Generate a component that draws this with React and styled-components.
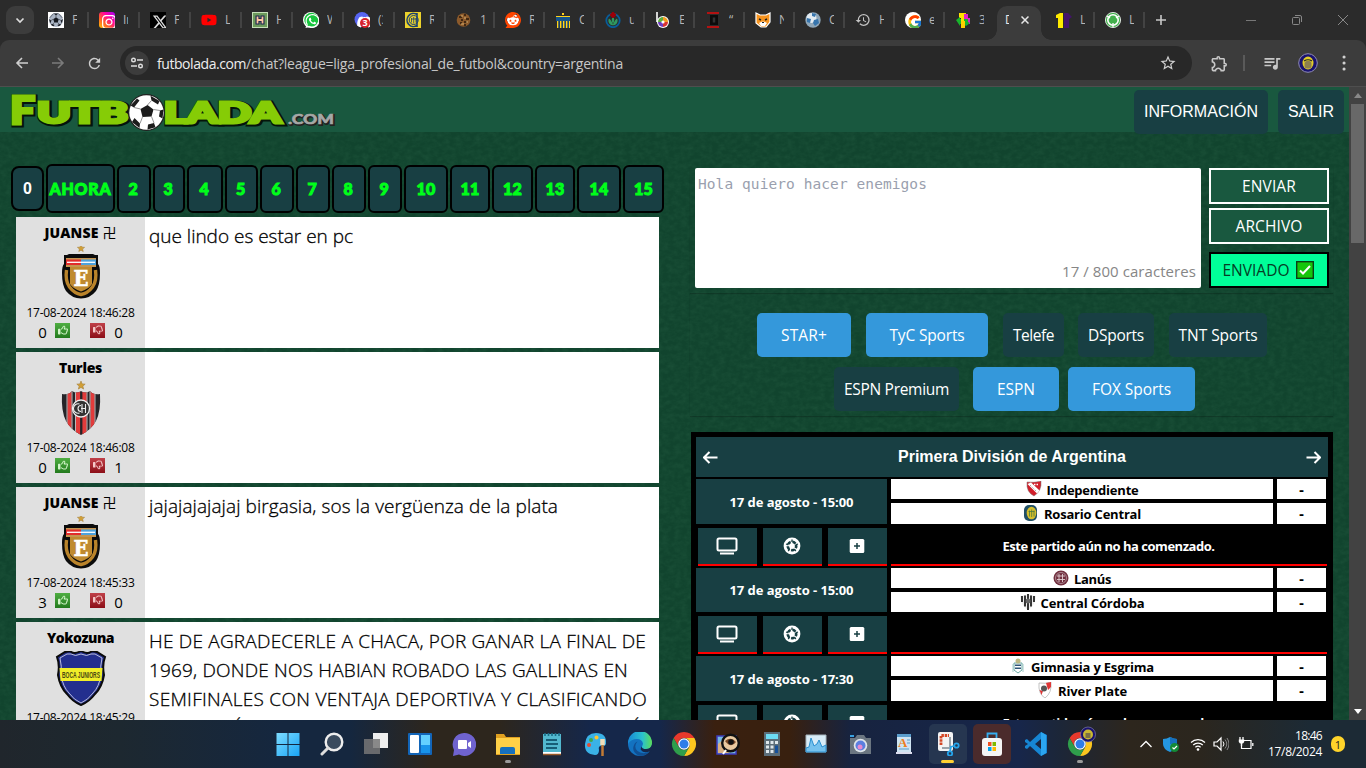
import React, { useLayoutEffect, useRef, useState } from 'react';
import styled, { createGlobalStyle, css } from 'styled-components';
import { FaInstagram, FaYoutube, FaWhatsapp, FaDiscord, FaReddit, FaXTwitter, FaRegThumbsUp, FaRegThumbsDown } from 'react-icons/fa6';
import { FcGoogle } from 'react-icons/fc';
import { MdHistory, MdRefresh, MdStarBorder, MdOutlineExtension, MdQueueMusic } from 'react-icons/md';

const sans = '"Open Sans", "Noto Sans", "Noto Sans CJK JP", sans-serif';
const arial = '"Liberation Sans", Arial, sans-serif';

const Global = createGlobalStyle`
  * { box-sizing: border-box; }
  html, body { margin: 0; height: 768px; overflow: hidden; background: #12462f; }
  body { font-family: ${sans}; }
  button { font: inherit; border: 0; padding: 0; margin: 0; }
  svg { display: block; flex: none; }
`;

/* Spaces the letters of a line so that it takes the given width. */
const FitSpan = styled.span`
  display: inline-block;
  white-space: pre;
  flex: none;
`;
function Fit({ w, children }) {
  const ref = useRef(null);
  const [gap, setGap] = useState(0);
  useLayoutEffect(() => {
    const natural = ref.current.getBoundingClientRect().width;
    setGap((w - natural) / String(children).length);
  }, []);
  return <FitSpan ref={ref} style={{ letterSpacing: `${gap}px` }}>{children}</FitSpan>;
}

/* ---------- browser ---------- */
const Screen = styled.div`
  width: 1366px;
  height: 768px;
  display: flex;
  flex-direction: column;
  overflow: hidden;
`;
const TabStrip = styled.div`
  height: 40px;
  flex: none;
  display: flex;
  align-items: center;
  background: #2b2b2b;
`;
const TabSearch = styled.button`
  width: 28px;
  height: 28px;
  margin: 0 4px 0 6px;
  border-radius: 9px;
  background: #3c3c3c;
  display: grid;
  place-items: center;
  flex: none;
`;
const Tab = styled.div`
  width: ${p => p.$w}px;
  height: 16px;
  flex: none;
  display: flex;
  align-items: center;
  padding-left: 10px;
  border-right: 2px solid ${p => (p.$last ? 'transparent' : '#434343')};
`;
const TabTitle = styled.span`
  width: 5px;
  margin-left: 8px;
  overflow: hidden;
  white-space: nowrap;
  font-size: 12px;
  line-height: 16px;
  color: #b5b5b5;
`;
const ActiveTab = styled.div`
  position: relative;
  width: 44px;
  height: 34px;
  align-self: flex-end;
  margin: 0 5px 0 2px;
  border-radius: 10px 10px 0 0;
  background: #3c3c3c;
  flex: none;
  display: flex;
  align-items: center;
  padding: 0 0 6px;
  &::before, &::after {
    content: '';
    position: absolute;
    bottom: 0;
    width: 10px;
    height: 10px;
  }
  &::before { left: -10px; background: radial-gradient(circle at 0 0, transparent 9.5px, #3c3c3c 10px); }
  &::after { right: -10px; background: radial-gradient(circle at 100% 0, transparent 9.5px, #3c3c3c 10px); }
  ${TabTitle} { width: 4px; margin: 0 12px 0 8px; color: #e8e8e8; }
`;
const WindowButtons = styled.div`
  margin-left: auto;
  display: flex;
  gap: 34px;
  padding-right: 17px;
`;
const Toolbar = styled.div`
  background: #2b2b2b;
  flex: none;
`;
const ToolbarInner = styled.div`
  height: 47px;
  border-radius: 9px 9px 0 0;
  border-bottom: 1px solid #4e4e4e;
  background: #3c3c3c;
  display: flex;
  align-items: center;
  padding-left: 14px;
`;
const NavIcons = styled.div`
  width: 106px;
  display: flex;
  gap: 20px;
`;
const Omnibox = styled.div`
  width: 1072px;
  height: 34px;
  border-radius: 17px;
  background: #282828;
  display: flex;
  align-items: center;
  padding: 0 15px 0 5px;
  font-size: 14px;
  color: #c7c7c7;
  b { color: #eee; font-weight: 400; }
`;
const SiteInfo = styled.span`
  width: 24px;
  height: 24px;
  border-radius: 50%;
  background: #3c3c3c;
  display: grid;
  place-items: center;
  margin-right: 8px;
`;
const Url = styled.span` flex: 1; `;
const ToolRight = styled.div`
  display: flex;
  align-items: center;
  padding-left: 18px;
`;
const Divider = styled.i`
  width: 2px;
  height: 16px;
  margin: 0 17px 0 14px;
  background: #5a5a5a;
`;

/* ---------- page ---------- */
const Viewport = styled.div`
  height: 633px;
  flex: none;
  display: flex;
  overflow: hidden;
`;
const Page = styled.div`
  position: relative;
  width: 1349px;
  height: 633px;
  overflow: hidden;
  background: #11442e;
`;
const Texture = styled.svg`
  position: absolute;
  inset: 0;
`;
const Header = styled.header`
  position: relative;
  height: 45px;
  background: #19583f;
  display: flex;
  align-items: flex-start;
  padding: 3px 5px 0 6px;
`;
const HeaderButton = styled.button`
  height: 44px;
  width: ${p => p.$w}px;
  margin-left: 10px;
  border-radius: 5px;
  background: #183f43;
  color: #fff;
  font: 16px ${arial};
`;
const Columns = styled.div`
  position: relative;
  display: flex;
  padding: 32px 16px 0 11px;
`;
const Left = styled.section` width: 653px; flex: none; `;
const Right = styled.section` width: 643px; margin: 4px 0 0 26px; flex: none; `;
const Pager = styled.nav`
  display: flex;
  align-items: center;
  gap: 2px;
  height: 49px;
`;
const PageButton = styled.button`
  width: ${p => p.$w}px;
  height: 48px;
  border: 2px solid #000;
  border-radius: 6px;
  background: #183f43;
  color: #00ff1a;
  font: 900 16px Lato, sans-serif;
  -webkit-text-stroke: 1px #00ff1a;
  flex: none;
  ${p => p.$tall && css`height: 49px;`}
  ${p => p.$count && css`
    height: 45px;
    border-radius: 8px;
    color: #fff;
    font: bold 16px ${arial};
    -webkit-text-stroke: 0;
  `}
`;
const Messages = styled.div`
  margin: 4px 0 0 5px;
  width: 643px;
  display: flex;
  flex-direction: column;
  gap: 4px;
`;
const Message = styled.article`
  height: 131px;
  display: flex;
  background: #fff;
`;
const Author = styled.div`
  width: 129px;
  background: #e0e0e0;
  display: flex;
  flex-direction: column;
  align-items: center;
  padding-top: 6px;
  color: #000;
`;
const Name = styled.div`
  height: 20px;
  display: flex;
  align-items: center;
  gap: 4px;
  font-size: 14px;
  font-weight: 800;
  line-height: 20px;
  span + span { font-weight: 400; }
`;
const CrestBox = styled.div`
  height: 61px;
  display: flex;
  padding-top: 3px;
`;
const Stamp = styled.div`
  font-size: 12px;
  line-height: 18px;
  height: 18px;
`;
const Votes = styled.div`
  height: 20px;
  display: flex;
  align-items: center;
  font-size: 15px;
  span { width: 9px; text-align: center; line-height: 20px; }
`;
const Thumb = styled.i`
  width: 15px;
  height: 15px;
  margin: ${p => (p.$down ? '0 9px 4px 10px' : '0 10px 4px 8px')};
  display: grid;
  place-items: center;
  color: ${p => (p.$down ? '#f5c9c9' : '#d3f5c9')};
  background: ${p => (p.$down ? 'linear-gradient(#c04048, #8c0f18)' : 'linear-gradient(#4fae42, #237a1d)')};
`;
const Body = styled.div`
  padding: 5px 0 0 4px;
  font-size: 19px;
  font-weight: 300;
  -webkit-text-stroke: 0.3px #000;
  line-height: 29px;
  color: #000;
  div { height: 29px; }
`;

const Composer = styled.div`
  height: 125px;
  padding-left: 5px;
  display: flex;
  gap: 8px;
  box-shadow: 0 1px 1px rgba(0, 0, 0, 0.2);
`;
const TextBox = styled.div`
  width: 506px;
  height: 120px;
  border-radius: 2px;
  background: #fff;
  display: flex;
  flex-direction: column;
  justify-content: space-between;
  padding: 6px 5px 6px 3px;
`;
const Placeholder = styled.div`
  font: 14.5px/20px "DejaVu Sans Mono", monospace;
  color: #9a9fae;
`;
const Counter = styled.div`
  text-align: right;
  font-size: 15px;
  line-height: 22px;
  color: #868686;
`;
const Actions = styled.div`
  width: 120px;
  display: flex;
  flex-direction: column;
  gap: 4px;
`;
const Action = styled.button`
  height: 36px;
  border: 2px solid ${p => (p.$sent ? '#000' : '#fff')};
  background: ${p => (p.$sent ? '#00ff99' : '#19583f')};
  color: ${p => (p.$sent ? '#053d25' : '#fff')};
  margin-top: ${p => (p.$sent ? 4 : 0)}px;
  padding-right: ${p => (p.$sent ? 2 : 0)}px;
  display: flex;
  align-items: center;
  justify-content: center;
  gap: 6px;
  font-size: 15.5px;
`;
const Channels = styled.div`
  height: 123px;
  padding-top: 20px;
  box-shadow: 0 1px 1px rgba(0, 0, 0, 0.2);
`;
const ChannelRow = styled.div`
  display: flex;
  padding-left: ${p => p.$left}px;
  height: 54px;
`;
const Channel = styled.button`
  width: ${p => p.$w}px;
  height: 44px;
  margin-right: ${p => p.$gap}px;
  border-radius: 5px;
  background: ${p => (p.$on ? '#3498db' : '#183f43')};
  color: #fff;
  font-size: 15.5px;
`;
const Fixture = styled.div`
  margin: 16px 0 0 1px;
  width: 642px;
  padding: 5px;
  background: #000;
`;
const LeagueBar = styled.div`
  height: 40px;
  background: #183f43;
  display: flex;
  align-items: center;
  justify-content: space-between;
  padding: 0 7px;
  color: #fff;
  font: bold 16px ${arial};
`;
const Match = styled.div`
  display: flex;
  gap: 4px;
  padding-top: 2px;
  height: ${p => p.$h}px;
`;
const MatchSide = styled.div` width: 191px; `;
const MatchDate = styled.div`
  height: ${p => p.$h}px;
  background: #183f43;
  color: #fff;
  display: grid;
  place-items: center;
  font-size: 13px;
  font-weight: 700;
`;
const MatchTools = styled.div`
  margin-top: 4px;
  padding-left: 2px;
  display: flex;
  gap: 6px;
`;
const MatchTool = styled.button`
  width: 59px;
  height: 38px;
  padding-right: 1px;
  border-bottom: 2px solid #f00;
  background: #183f43;
  display: grid;
  place-items: center;
  color: #fff;
`;
const MatchMain = styled.div`
  width: 437px;
  display: flex;
  flex-direction: column;
`;
const TeamRow = styled.div`
  display: flex;
  gap: 4px;
  height: ${p => p.$h}px;
  margin-bottom: 4px;
`;
const Team = styled.div`
  width: 382px;
  padding-top: 1px;
  background: #fff;
  color: #000;
  display: flex;
  justify-content: center;
  align-items: center;
  gap: 5px;
  font-size: 13px;
  font-weight: 700;
  line-height: 18px;
  svg { margin-top: -2px; }
`;
const Score = styled(Team)` width: 49px; font-family: ${arial}; font-size: 15px; `;
const Notice = styled.div`
  width: 436px;
  height: 38px;
  padding-right: 1px;
  border-bottom: 2px solid #f00;
  color: #fff;
  display: grid;
  place-items: center;
  font-size: 13px;
  font-weight: 700;
`;
const Scrollbar = styled.div`
  width: 17px;
  background: #424242;
  display: flex;
  flex-direction: column;
  align-items: center;
  padding: 6px 0 6px;
`;
const ScrollThumb = styled.div`
  width: 13px;
  height: 139px;
  margin: 6px 0 auto;
  background: #686868;
`;

/* ---------- taskbar ---------- */
const Taskbar = styled.footer`
  height: 48px;
  flex: none;
  display: flex;
  align-items: center;
  padding-left: 266px;
  background: linear-gradient(90deg, #20262c 0, #1d2830 120px, #15273f 280px, #15273f 350px, #2d261d 430px, #2d261d 500px, #15274a 590px, #15274a 660px, #3a200f 715px, #38200f 790px, #17233f 850px, #17264a 1020px, #1c2638 1060px, #2d261d 1130px, #2b261e 1200px, #1c2a35 1310px, #1c2a35 100%);
`;
const TaskItem = styled.div`
  position: relative;
  width: 44px;
  height: 48px;
  display: grid;
  place-items: center;
  flex: none;
`;
const TaskTile = styled.div`
  width: 38px;
  height: 40px;
  margin: 0 -3px;
  border-radius: 5px;
  display: grid;
  place-items: center;
  background: ${p => p.$bg || 'transparent'};
`;
const RunMark = styled.i`
  position: absolute;
  bottom: 5px;
  left: ${p => (p.$wide ? 15 : 19)}px;
  width: ${p => (p.$wide ? 13 : 6)}px;
  height: 3px;
  border-radius: 2px;
  background: ${p => (p.$wide ? '#ffd033' : '#9a9a9a')};
`;
const Tray = styled.div`
  margin-left: auto;
  padding-right: 21px;
  display: flex;
  align-items: center;
`;
const Space = styled.span`
  width: ${p => p.$w}px;
  flex: ${p => (p.$w ? 'none' : 1)};
`;
const Clock = styled.div`
  width: 63px;
  margin-right: 9px;
  text-align: right;
  font-size: 12px;
  line-height: 16px;
  color: #fff;
`;
const Badge = styled.div`
  width: 14px;
  height: 16px;
  border-radius: 8px;
  background: #ffd42a;
  display: grid;
  place-items: center;
  font-size: 11px;
  color: #222;
`;

/* ---------- drawings ---------- */
const I = ({ s = 16, w, h, v = 16, vb, children }) => (
  <svg width={w || s} height={h || s} viewBox={vb || `0 0 ${v} ${v}`} fill="none">{children}</svg>
);

const Ball = ({ x = 8, y = 8, r = 8, bg = '#fff', fg = '#111' }) => (
  <g transform={`translate(${x} ${y}) scale(${r / 10})`}>
    <circle r="10" fill={bg} />
    <path d="M0-4 3.9-1.2 2.4 3.4H-2.4L-3.9-1.2Z M-3.5-9.3 3.5-9.3 0-6.8Z M9.9-1.5 8.3 5 6.6 1Z M-9.9-1.5-8.3 5-6.6 1Z M4 9.1 1.8 7 6.3 5.2 7 7Z M-4 9.1-1.8 7-6.3 5.2-7 7Z" fill={fg} />
    <path d="M0-4V-7M3.9-1.2 6.8.5M2.4 3.4 4.4 6M-2.4 3.4-4.4 6M-3.9-1.2-6.8.5M3.5-9.3 9-3M-3.5-9.3-9-3" stroke={fg} strokeWidth=".7" />
  </g>
);

/* The logo's ball, turned: a dark patch in the middle and a ring of patches cut by the rim. */
const LogoBall = () => (
  <g>
    <circle r="18.500" fill="#222" />
    <circle r="17.200" fill="#fff" />
    <path d="M-6-3.500 1-7.500 7-3 5 4-4 4.500Z M-16-7-9.500-14-7-12-12.500-5Z M4-16.800 13-11.500 11.500-8 5-12Z M17-3 16 6 12.500 4 13.500-2Z M9 14.800 1 17 1.500 12 7.500 10.500Z M-14.500 9.500-7 15.500-6.500 11-12 5.500Z" fill="#1c1c1c" />
    <path d="M1-7.500 5-12M7-3l6.500 1M5 4l2.500 6.500M-4 4.500-6.500 11M-6-3.500-12.500-5" stroke="#777" strokeWidth=".8" />
  </g>
);

const favicons = {
  ball: <I><rect width="16" height="16" fill="#fff" /><Ball r={7} bg="#aab4c4" fg="#15181f" /></I>,
  instagram: <svg width="16" height="16" viewBox="0 0 16 16"><defs><linearGradient id="ig" x1="0" y1="1" x2="1" y2="0"><stop offset="0" stopColor="#ffc400" /><stop offset=".35" stopColor="#ff5a2c" /><stop offset=".65" stopColor="#ff00a0" /><stop offset="1" stopColor="#a000ff" /></linearGradient></defs><rect width="16" height="16" rx="3" fill="url(#ig)" /><FaInstagram x="2" y="2" width="12" height="12" color="#fff" /></svg>,
  x: <svg width="16" height="16"><rect width="16" height="16" /><FaXTwitter x="2" y="2" width="12" height="12" color="#ddd" /></svg>,
  youtube: <FaYoutube size={16} color="#f00" />,
  hattrick: <I><rect x=".5" y=".5" width="15" height="15" fill="#6c9a5b" stroke="#c5e0b8" /><path d="M5.500 3.500v9M10.500 3.500v9M5 8h6" stroke="#1b2350" strokeWidth="4" /><path d="M5.500 4.500v7M10.500 4.500v7M5 8h6" stroke="#ffc7a0" strokeWidth="1.800" /></I>,
  whatsapp: <svg width="16" height="16"><circle cx="8" cy="8" r="8" fill="#fff" /><circle cx="8.3" cy="7.7" r="7" fill="#18c53e" /><FaWhatsapp x="1.5" y="1" width="13.5" height="13.5" color="#fff" /></svg>,
  discord: <svg width="16" height="16"><circle cx="8" cy="7.5" r="7.5" fill="#5865f2" /><FaDiscord x="2.5" y="2" width="10" height="10" color="#fff" /><circle cx="11" cy="11" r="5" fill="#d8232a" /><text x="8.4" y="14.4" fontSize="9" fontWeight="700" fontFamily="Open Sans" fill="#fff">3</text></svg>,
  central: <I><rect width="16" height="16" fill="#ecd22c" /><path d="M12 2.5A6.5 6.5 0 1 0 12 13.5M12 1v14" stroke="#1c4272" strokeWidth="1.6" /><circle cx="8.7" cy="8" r="4.5" stroke="#1c4272" /><path d="M6.5 6v4.5M8.7 5v6.5M11 6v4.5M6 7h6" stroke="#1c4272" strokeWidth=".8" /></I>,
  cookie: <I><circle cx="7.5" cy="8" r="6.8" fill="#8c5a2b" /><path d="M3 5h3M8 3h2M5 8h2M10 7h3M4 11h2M8 10h3M8 13h2" stroke="#2a190b" strokeWidth="1.6" /><path d="M5 4h2M8 6h2M5 12h3M10 10h2" stroke="#d8b070" strokeWidth="1" /></I>,
  reddit: <svg width="16" height="16"><circle cx="8" cy="8" r="6" fill="#fff" /><FaReddit width="16" height="16" color="#ff4500" /></svg>,
  gate: <I><path d="M7 1h2v2H7zM1 4h14v2H1zM2 9h1.5v7H2zM5 9h1.5v7H5zM8 9h1.5v7H8zM11 9h1.5v7H11zM14 9h1v7h-1z" fill="#ffd31a" /><path d="M1 5h14v4H1z" fill="#14538c" /><path d="M4 9v7M7.3 9v7M10.3 9v7M13.3 9v7" stroke="#14538c" /></I>,
  wiki: <I><circle cx="8" cy="8.500" r="6.700" stroke="#075e9b" strokeWidth="1.800" /><path d="M4 6.500a4.600 4.600 0 1 0 8 0q-2 1-4 6-2-5-4-6Z" fill="#2f9a60" /><path d="M8 5q2.500 2 0 7-2.500-5 0-7Z" fill="#2f9a60" /><path d="m8 0 3 2.800L8 6 5 2.800Z" fill="#9c0008" stroke="#9c0008" /></I>,
  bwheel: <I><path d="M2 0v10" stroke="#fff" strokeWidth="1.6" /><circle cx="8" cy="10" r="6" fill="#fff" /><path d="M8 10V5a5 5 0 0 1 5 5z" fill="#f39b21" /><path d="M8 10h5a5 5 0 0 1-5 5z" fill="#d83333" /><path d="M8 10v5a5 5 0 0 1-5-5z" fill="#6d3bc0" /><path d="M8 10H3a5 5 0 0 1 5-5z" fill="#5dad3f" /><circle cx="8" cy="10" r="1.6" fill="#fff" /></I>,
  redbar: <I><path d="M2 1h12M2 15h12" stroke="#b31212" strokeWidth="2" /><path d="M5 3h8v10H5z" fill="#0c0c0c" /><path d="M9 5.5v5" stroke="#333" strokeWidth="2.5" /></I>,
  cat: <I><path d="m1 1 4 2h6l4-2v9l-4 5H6L1 11z" fill="#f6931e" stroke="#fff" strokeWidth="1.2" /><path d="M4 7l2 1M12 7l-2 1" stroke="#222" strokeWidth="1.4" /><path d="M4 11q4-3 8 0l-2 3H6z" fill="#fff" /><path d="m7 10 1 1 1-1" stroke="#222" /></I>,
  bluesphere: <I><circle cx="8" cy="8" r="7.700" fill="#8fa6b8" /><circle cx="6.500" cy="6" r="5" fill="#e3ebf1" /><path d="m9 8 4-1 1 4-4 3-2-3zM2 6l4 1-1 4-3-1zM7 1l4 1-1 3-3-1z" fill="#3775ad" /></I>,
  history: <MdHistory size={16} color="#c4c4c4" />,
  google: <svg width="16" height="16"><circle cx="8" cy="8" r="8" fill="#fff" /><FcGoogle x="2" y="2" width="12" height="12" /></svg>,
  puzzle: <I><path d="M4 1h7v5H4z" fill="#ffe100" /><path d="M9 2h4v4h2v6H9z" fill="#e31ec9" /><path d="m1 8 4-3v2h8v3l2 1-4 3-3-2H5v2z" fill="#18b42c" /><path d="M6 9h4v7H6z" fill="#ffd000" /><path d="M6 4h3v5H6z" fill="#ffe100" /></I>,
  one: <I><path d="M0 3 4 1h3v15H2V6H0z" fill="#ffea00" /><path d="M8 1h4l4 4-3 2v9H8z" fill="#43146b" /></I>,
  greenball: <I><circle cx="8" cy="8" r="7.600" fill="#42b04c" stroke="#fff" strokeWidth=".8" /><circle cx="8" cy="8" r="5.200" stroke="#fff" strokeWidth="1.600" /><path d="M5 6h6l.5 2L8 11 4.500 8Z" fill="#42b04c" /><path d="m2 4 3 2M14 4l-3 2M8 11v4" stroke="#fff" strokeWidth="1.300" /></I>,
};

const tabs = [
  ['ball', 'F', 51], ['instagram', 'In', 51], ['x', 'F', 51], ['youtube', 'L', 51], ['hattrick', 'H', 51], ['whatsapp', 'W', 51],
  ['discord', '(3', 51], ['central', 'R', 51], ['cookie', '1', 49], ['reddit', 'R', 50], ['gate', 'C', 50], ['wiki', 'u', 50],
  ['bwheel', 'E', 50], ['redbar', '“', 50], ['cat', 'N', 50], ['bluesphere', 'C', 50], ['history', 'H', 50], ['google', 'e', 50],
];

const Avatar = ({ s = 20 }) => (
  <I s={s} v={20}><circle cx="10" cy="10" r="9.3" fill="#19126f" stroke="#8f8bb5" /><ellipse cx="10" cy="10" rx="5.500" ry="6.500" fill="#e2cd2a" /><rect x="6.500" y="8" width="7" height="7.500" rx="2.500" fill="#8c7f4e" /><path d="M6 8q4-2.500 8 0" stroke="#222" strokeWidth="1.100" /></I>
);

const Star = ({ x, y, r }) => (
  <path transform={`translate(${x} ${y}) scale(${r})`} d="M0-1 .26-.36.95-.31.42.14.59.81 0 .44-.59.81-.42.14-.95-.31-.26-.36Z" fill="#d29f35" stroke="#a8843f" strokeWidth=".15" />
);

const crests = {
  riestra: (
    <I w={40} h={54} vb="0 0 40 54">
      <Star x={20} y={2.5} r={3.8} />
      <path d="M3 9h3l2-1h24l2 1h3v9q2 2 2 9 0 12-4 18-6 7.500-15 7.500T5 45Q1 39 1 27q0-7 2-9Z" fill="#0b0b0b" />
      <path d="M5.500 24q-1.500 11 3 17 5 6.500 11.500 7.500 6.500-1 11.500-7.500 4.500-6 3-17" stroke="#b9832a" strokeWidth="3.400" />
      <path d="M9 21h22v17q-3 5-11 7.500-8-2.500-11-7.500Z" fill="#c08a30" />
      <path d="M5 12h30v9H5z" fill="#c59550" /><path d="M5 13.500h15v5.500H5z" fill="#e12b2b" /><path d="M20 13.500h15v5.500H20z" fill="#4da3dd" /><path d="M6 16.300h28" stroke="#fff" strokeWidth="1.300" />
      <text x="12.500" y="39.500" fontSize="22" fontWeight="700" fontFamily="DejaVu Serif" fill="#fff" stroke="#fff" strokeWidth=".6" textLength="15" lengthAdjust="spacingAndGlyphs">E</text>
    </I>
  ),
  chacarita: (
    <I w={40} h={54} vb="0 0 40 54">
      <defs><clipPath id="chaca"><path d="M1 13q7 1 10-3 5 3 9 0 4 3 9 0 3 4 10 3 1 17-4 27-5 9-15 14Q10 49 5 40 0 30 1 13Z" /></clipPath></defs>
      <Star x={20} y={4.5} r={4.4} />
      <g clipPath="url(#chaca)"><path d="M0 8h40v48H0z" fill="#252428" /><path d="M8.500 8v46M17 8v46M23.500 8v46M31.500 8v46" stroke="#e23b3b" strokeWidth="4.200" /><path d="M6 8v46M11 8v46M14.500 8v46M26 8v46M29 8v46M34 8v46" stroke="#ddd" strokeWidth=".8" /></g>
      <circle cx="20" cy="27.500" r="8.500" fill="#333" stroke="#eee" strokeWidth="1.300" />
      <path d="M18.500 23a4.700 4.700 0 1 0 0 9M20 24.500a3 3 0 1 0 0 6M21 23v9M24.500 23v9M20 27.500h4.500" stroke="#eee" strokeWidth="1.100" />
    </I>
  ),
  boca: (
    <I w={52} h={56} vb="0 1 52 56">
      <path d="m10 2 5-1q4 4 11 0 7 4 11 0l5 1 8 5q-3 8-1 18-2 12-9 19-6 8-14 11-8-3-14-11-7-7-9-19 2-10-1-18Z" fill="#232f8e" stroke="#0b0b0b" strokeWidth="2" />
      <path d="m5 8 7-4 4 0q4 3 10 0 6 3 10 0l4 0 7 4q-2 8-1 17-2 12-8 18-5 7-12 10-7-3-12-10-6-6-8-18 1-9-1-17Z" stroke="#dfe1ee" strokeWidth=".8" />
      <path d="M4.500 18h43l-1 13h-41z" fill="#f1ee29" />
      <text x="7" y="27.800" fontSize="8.500" fontWeight="700" fontFamily="Liberation Sans Narrow, Liberation Sans" fill="#494713" textLength="38" lengthAdjust="spacingAndGlyphs">BOCA JUNIORS</text>
    </I>
  ),
};

const teamCrests = {
  independiente: <I><path d="M1 1q7 1 14-1 1 10-7 15Q0 11 1 1Z" fill="#d21f2b" stroke="#777" strokeWidth=".5" /><path d="m1.500 3 9.500 9.500 2.500-3L5 1.500Z" fill="#fff" /><path d="M8 3.500h5" stroke="#fff" strokeWidth="1.500" strokeDasharray="1.500 1" /><path d="m4 4 6 6" stroke="#888" strokeDasharray="1 1.500" /></I>,
  central: <I><rect x="1" width="13" height="16" rx="5" fill="#215066" /><ellipse cx="8.500" cy="8" rx="4.800" ry="6.300" fill="#d7bf2c" /><path d="M6.500 5.500v6M8.700 4.500v7.500M11 5.500v6M5.500 6.500h6" stroke="#4a7a40" strokeWidth=".8" /></I>,
  lanus: <I><circle cx="8" cy="8" r="7.500" fill="#71303f" /><circle cx="8" cy="8" r="5.500" stroke="#b99ba3" strokeWidth=".8" /><path d="M4 6h8M4 9.500h8M6 4v8M9.500 4v8" stroke="#e2d0d5" strokeWidth=".9" /></I>,
  cordoba: <I><path d="M0 2q4 0 8-2 4 2 8 2-1 10-8 14Q1 12 0 2Z" fill="#eee" /><path d="M2 2v6M5 1.500v11M8 0v16M11 1.500v11M14 2v6" stroke="#151515" strokeWidth="1.700" /><circle cx="8" cy="7" r="2.500" fill="#666" /></I>,
  gimnasia: <I><path d="M4 5h8v7l-4 3-4-3z" fill="#fff" stroke="#6aa8a4" /><circle cx="8" cy="3" r="2.500" fill="#bdb783" /><path d="M5 6.500h6v1.500H5zM5 9.500h6V11H5z" fill="#2d5577" /><path d="M3 6v8M13 6v8" stroke="#a3cac8" /></I>,
  river: <I><path d="M2 1q6 1 12-1 1 11-6 16Q1 12 2 1Z" fill="#fff" stroke="#aaa" strokeWidth=".7" /><path d="m9 1 5-1v5l-3 3zM2.500 8 6 9l-1.500 4Z" fill="#e03636" /><circle cx="7" cy="6.500" r="3" fill="#555" /></I>,
};

const TvIcon = () => <I w={22} h={18} vb="0 0 22 18"><rect x="1.500" y="1.500" width="19" height="12" rx="1.500" stroke="#fff" strokeWidth="2" /><path d="M4 16.500h14" stroke="#fff" strokeWidth="2" /></I>;
const MatchBall = () => (
  <I s={18} v={18}>
    <circle cx="9" cy="9" r="8.400" fill="#fff" />
    <circle cx="9" cy="9" r="4.200" stroke="#183f43" strokeWidth="2.600" strokeDasharray="3.400 1.878" transform="rotate(-18 9 9)" />
    <path d="M9 2.600V5M15 7l-2.400.8M12.800 14l-1.500-2M5.200 14l1.500-2M3 7l2.400.8" stroke="#183f43" strokeWidth="1.300" />
  </I>
);
const PlusIcon = () => <I s={16}><rect x=".7" y="1" width="14.600" height="14" rx="1.500" fill="#fff" /><path d="M8 5v6M5 8h6" stroke="#183f43" strokeWidth="1.500" /></I>;
const Arrow = ({ right }) => <I s={15} v={15}><path d={right ? 'M.5 7.500H14M8.500 2 14 7.500 8.500 13' : 'M14.500 7.500H1M6.500 2 1 7.500l5.500 5.500'} stroke="#fff" strokeWidth="2" /></I>;

const Logo = () => {
  const t = { fontFamily: 'Lato', fontWeight: 900, fill: '#86cc06', stroke: '#86cc06', strokeWidth: 3 };
  const d = { ...t, fill: '#05140a', stroke: '#05140a', strokeWidth: 5 };
  const words = (s, dx, dy) => (
    <g transform={`translate(${dx} ${dy})`} {...s}>
      <text x="4" y="34" fontSize="38" textLength="25" lengthAdjust="spacingAndGlyphs">F</text>
      <text x="31" y="32.500" fontSize="28" textLength="91" lengthAdjust="spacingAndGlyphs">UTB</text>
      <text x="158" y="32.500" fontSize="28" textLength="117" lengthAdjust="spacingAndGlyphs">LADA</text>
    </g>
  );
  return (
    <svg width="332" height="42" viewBox="0 0 332 42">
      {words(d, 1, 1)}{words(t, 0, 0)}
      <g transform="translate(140.500 22.500)"><LogoBall /></g>
      <text x="283" y="35" fontSize="14" fontWeight="900" fontFamily="Lato" fill="#222" stroke="#222" strokeWidth="2" textLength="46" lengthAdjust="spacingAndGlyphs">.COM</text>
      <text x="282" y="34" fontSize="14" fontWeight="900" fontFamily="Lato" fill="#a5a8a6" stroke="#a5a8a6" strokeWidth=".6" textLength="46" lengthAdjust="spacingAndGlyphs">.COM</text>
    </svg>
  );
};

const Chrome = ({ avatar }) => (
  <svg width="26" height="28" viewBox="0 0 26 28" overflow="visible">
    <g transform="translate(13 14)">
      <path d="M-10.400-6A12 12 0 0 1 10.400-6H0A6 6 0 0 0-5.200 3Z" fill="#e8392c" />
      <path d="M10.400-6A12 12 0 0 1 0 12L5.200 3A6 6 0 0 0 0-6Z" fill="#fcc61f" />
      <path d="M0 12A12 12 0 0 1-10.400-6L-5.200 3A6 6 0 0 0 5.200 3Z" fill="#2f9e4b" />
      <circle r="5.800" fill="#fff" /><circle r="4.500" fill="#2f7de9" />
    </g>
    {avatar && <g transform="translate(14 -3)"><circle cx="7" cy="7.500" r="7.500" fill="#19126f" stroke="#8f8bb5" strokeWidth=".6" /><circle cx="7" cy="7.500" r="5" fill="#c9b832" /><rect x="4.500" y="6" width="5" height="5" fill="#7b7045" /></g>}
  </svg>
);

const taskIcons = [
  [<I s={24} v={24}><defs><linearGradient id="win" x1="0" y1="0" x2="1" y2="1" gradientUnits="objectBoundingBox"><stop stopColor="#7ddcff" /><stop offset="1" stopColor="#19a4f5" /></linearGradient></defs><path d="M.5 1H11.500V12H.5zM12.500 1H23.500V12H12.500zM.5 13H11.500V24H.5zM12.500 13H23.500V24H12.500z" fill="url(#win)" /></I>],
  [<I s={24} v={24}><circle cx="14" cy="10" r="8.300" fill="#3a4b5e" stroke="#eee" strokeWidth="2.400" /><path d="m8 16-6 6" stroke="#ddd" strokeWidth="3" strokeLinecap="round" /></I>],
  [<I s={24} v={24}><rect x="9" y="1" width="15" height="15" fill="#eee" /><rect x="0" y="7" width="16" height="15" fill="#777" fillOpacity=".85" /></I>],
  [<I s={24} v={24}><rect x="0" y="1" width="24" height="22" rx="1" fill="#1265b8" /><rect x="2" y="3" width="9" height="18" rx="1" fill="#fff" /><rect x="13" y="3" width="9" height="10" fill="#63d0ff" /><rect x="13" y="13" width="9" height="8" fill="#1894ea" /></I>],
  [<I s={24} v={24}><path d="M12 1a11.500 11.500 0 1 1-5 21.500L1 24l1-6A11.500 11.500 0 0 1 12 1z" fill="#6f63cf" /><rect x="6" y="8" width="9" height="9" rx="1" fill="#fff" /><path d="m16 11 3-2v7l-3-2z" fill="#fff" /></I>],
  [<I s={24} v={24}><path d="M0 2h8l2 3h14v18H0z" fill="#e0a020" /><path d="M0 6h24v16H0z" fill="#ffd047" /><path d="M4 22v-5q0-2 2-2h11q2 0 2 2v5z" fill="#1670bd" /></I>, 'run'],
  [<I s={24} v={24}><rect x="3" y="2" width="18" height="19" fill="#52b8cf" /><path d="M3 20h18v2H3z" fill="#fff" /><path d="M3 22.500h18" stroke="#9a5a28" strokeWidth="1.500" /><path d="M5 1v3M8.500 1v3M12 1v3M15.500 1v3M19 1v3" stroke="#1a6d87" strokeWidth="1.600" /><path d="M6 8h11M6 12h12M6 16h11" stroke="#175e77" strokeWidth="1.800" /></I>],
  [<I s={24} v={24}><path d="M12 1Q23 1 22 12q-1 3-5 2-3 0-2 4 0 5-4 5Q0 22 1 12 2 1 12 1Z" fill="#3ab2e7" /><circle cx="5" cy="13" r="2" fill="#e24d33" /><circle cx="7" cy="8" r="2" fill="#40a84a" /><circle cx="12.500" cy="5.500" r="2" fill="#ffc52b" /><path d="M18.500 12v12" stroke="#c17a35" strokeWidth="2.500" /><path d="M18.500 7v6" stroke="#f0ddb9" strokeWidth="4.500" /></I>],
  [<I s={24} v={24}><defs><linearGradient id="edge" x1="0" y1="0" x2="1" y2="0"><stop stopColor="#1788d5" /><stop offset=".6" stopColor="#2ac1ce" /><stop offset="1" stopColor="#5bdc58" /></linearGradient></defs><circle cx="12" cy="12" r="12" fill="#1372c0" /><path d="M0 11A12 12 0 0 1 24 11q0 6-6 6-4.500 0-4-2.500 1-2 1-3Q14 7 9 7 3 7 0 12Z" fill="url(#edge)" /><path d="M9.500 9.500q-4.500 5 0 9.500 5 4 12 .500Q17 25 10.500 23.500 4 20 5.500 14.500 6.500 10.500 9.500 9.500Z" fill="#104f93" /><path d="M14 14.500q-.5 2.500 4 2.500 4.500 0 6-4.500l1 6-3.500 1q-6 2-8.500-1.500-1-1.500 1-3.500Z" fill="#15274a" /></I>],
  [<Chrome />],
  [<I s={24} v={24}><rect x="1" y="4" width="19" height="18" fill="#77b8e2" stroke="#3e3bbd" strokeWidth="1.500" /><path d="m2 12 6-5 5 14H2z" fill="#d9b083" /><circle cx="14.500" cy="11" r="8.300" fill="#e9c9a0" stroke="#111" strokeWidth="2.400" /><path d="M9 9q6-5 11 1-5 7-11-1Z" fill="#7b4a28" /><circle cx="15" cy="10" r="2.800" fill="#111" /><path d="m10 18-3 4" stroke="#fff" strokeWidth="2" /></I>],
  [<I s={24} v={24}><rect x="4" y="0" width="16" height="24" fill="#5b6d79" /><rect x="6" y="2" width="12" height="5" fill="#6ddcf4" /><path d="M6 9h3v3H6zM10.500 9h3v3h-3zM6 13.500h3v3H6zM10.500 13.500h3v3h-3zM6 18h3v3H6zM10.500 18h3v3h-3zM15 9h3v3h-3z" fill="#dde6eb" /><path d="M15 13.500h3V21h-3z" fill="#16519b" /></I>],
  [<I s={24} v={24}><path d="M2 3h20v17H2z" fill="#d8ecf8" stroke="#a6b5be" /><path d="m2 16 3-1 2-9 3 8 3-2 2-4 3 7 4-2v7H2z" fill="#76c2ee" stroke="#2a8fd0" /></I>],
  [<I s={24} v={24}><path d="M2 6h5l2-3h7l2 3h5v16H2z" fill="#6b7681" /><circle cx="12.500" cy="13.500" r="6.800" fill="#dfe5ea" /><circle cx="12.500" cy="13.500" r="5" fill="#5b7fe0" /><circle cx="12" cy="15" r="2.500" fill="#e68bd0" /><path d="M2 4h4" stroke="#39a1e0" strokeWidth="2" /></I>],
  [<I s={24} v={24}><path d="M5 2h14v19H5z" fill="#cfe4f2" /><path d="M5 2h14v3H5z" fill="#5b9dcc" /><text x="6" y="15" fontSize="13" fontWeight="700" fontFamily="Liberation Serif" fill="#ee7d20">A</text><path d="M15 8h3M15 11h3M7 17h10" stroke="#5b9dcc" /><path d="M4 21h16" stroke="#dde" strokeWidth="2" /></I>],
  [<I s={24} v={24}><rect x="2" y="0" width="15" height="19" rx="2" fill="#f3f3f3" /><path d="M5 13V3.500h8" stroke="#d34726" strokeWidth="2.800" strokeDasharray="2.500 .8" /><path d="M14 5v11H6" stroke="#9aa3aa" strokeWidth="2" /><circle cx="20.500" cy="13.500" r="2.200" stroke="#25a4ea" strokeWidth="1.800" /><circle cx="14" cy="21.500" r="2.200" stroke="#25a4ea" strokeWidth="1.800" /><path d="m14 19 1-4M18 14l-4 1" stroke="#25a4ea" strokeWidth="1.800" /></I>, 'active', '#263650'],
  [<I s={24} v={24}><path d="M7.500 6V1.500h9V6" stroke="#35aef0" strokeWidth="1.800" /><rect x="2" y="6" width="20" height="18" rx="3" fill="#f5f5f5" /><path d="M8 10h3.500v4H8z" fill="#f25022" /><path d="M12.500 10H16v4h-3.500z" fill="#7fba00" /><path d="M8 15h3.500v4H8z" fill="#00a4ef" /><path d="M12.500 15H16v4h-3.500z" fill="#ffb900" /></I>, '', '#4b2b2c'],
  [<I s={24} v={24}><path d="m17 0 6 3v18l-6 3L6 14l-3 3-2-1 0-2 3-2-3-2V8l2-1 3 3zM17 7l-6 5 6 5z" fill="#1685d3" fillRule="evenodd" /><path d="m17 0 5 3v18l-5 3z" fill="#2ba5f0" /></I>],
  [<Chrome avatar />, 'run'],
];

const messages = [
  ['JUANSE', 54, true, 'riestra', '17-08-2024 18:46:28', 0, 0, [['que lindo es estar en pc', 204]]],
  ['Turles', 43, false, 'chacarita', '17-08-2024 18:46:08', 0, 1, []],
  ['JUANSE', 54, true, 'riestra', '17-08-2024 18:45:33', 3, 0, [['jajajajajajaj birgasia, sos la vergüenza de la plata', 409]]],
  ['Yokozuna', 67, false, 'boca', '17-08-2024 18:45:29', 0, 0, [
    ['HE DE AGRADECERLE A CHACA, POR GANAR LA FINAL DE', 497],
    ['1969, DONDE NOS HABIAN ROBADO LAS GALLINAS EN', 479],
    ['SEMIFINALES CON VENTAJA DEPORTIVA Y CLASIFICANDO', 498],
    ['ELLOS. ASÍ QUE GRACIAS A CHACARITA POR ESA COPA, SÍ', 489],
  ]],
];

const pages = [['AHORA', 69, 62], ['2', 34], ['3', 32], ['4', 36], ['5', 33], ['6', 34], ['7', 34], ['8', 34], ['9', 34], ['10', 44], ['11', 40], ['12', 41], ['13', 40], ['14', 44], ['15', 41]];

const channels = [
  [67, [['STAR+', 94, 15, 46, 1], ['TyC Sports', 122, 15, 75, 1], ['Telefe', 61, 14, 41], ['DSports', 76, 15, 56], ['TNT Sports', 98, 0, 79]]],
  [144, [['ESPN Premium', 125, 14, 105], ['ESPN', 86, 9, 38, 1], ['FOX Sports', 127, 0, 79, 1]]],
];

const matches = [
  ['17 de agosto - 15:00', 89, 45, [20, 21], ['independiente', 'Independiente', 92], ['central', 'Rosario Central', 97], true],
  ['17 de agosto - 15:00', 88, 44, [20, 20], ['lanus', 'Lanús', 37], ['cordoba', 'Central Córdoba', 104], false],
  ['17 de agosto - 17:30', 89, 45, [20, 21], ['gimnasia', 'Gimnasia y Esgrima', 123], ['river', 'River Plate', 69], true],
];

const TabItem = ({ icon, title, w, last }) => (
  <Tab $w={w} $last={last}>{favicons[icon]}<TabTitle>{title}</TabTitle></Tab>
);

export default function App() {
  return (
    <Screen>
      <Global />
      <TabStrip>
        <TabSearch><I s={10} v={10}><path d="m1.500 3.500 3.500 3.500 3.500-3.500" stroke="#ddd" strokeWidth="1.700" /></I></TabSearch>
        {tabs.map(([icon, title, w], i) => <TabItem key={i} icon={icon} title={title} w={w} />)}
        <TabItem icon="puzzle" title="3" w={50} last />
        <ActiveTab>
          <TabTitle>D</TabTitle>
          <I s={8} v={8}><path d="m.5.5 7 7M7.500.5l-7 7" stroke="#e6e6e6" strokeWidth="1.500" /></I>
        </ActiveTab>
        <TabItem icon="one" title="L" w={49} />
        <TabItem icon="greenball" title="L" w={50} />
        <I s={32} v={32}><path d="M16 11v10M11 16h10" stroke="#c8c8c8" strokeWidth="1.600" /></I>
        <WindowButtons>
          <I s={12} v={12}><path d="M1 6.500h10" stroke="#777" /></I>
          <I s={12} v={12}><rect x="1.500" y="3.500" width="7" height="7" rx="1" stroke="#888" /><path d="M4 1.500h5q1.500 0 1.500 1.500v5" stroke="#888" /></I>
          <I s={12} v={12}><path d="m1 1 10 10M11 1 1 11" stroke="#888" /></I>
        </WindowButtons>
      </TabStrip>
      <Toolbar>
        <ToolbarInner>
          <NavIcons>
            <I><path d="M14 8H3M8 3 3 8l5 5" stroke="#cfcfcf" strokeWidth="1.600" /></I>
            <I><path d="M2 8h11M8 3l5 5-5 5" stroke="#7b7b7b" strokeWidth="1.600" /></I>
            <MdRefresh size={17} color="#cfcfcf" />
          </NavIcons>
          <Omnibox>
            <SiteInfo><I s={14} v={14}><circle cx="3.500" cy="4" r="1.800" stroke="#ddd" strokeWidth="1.400" /><path d="M7 4h6M1 10h6" stroke="#ddd" strokeWidth="1.500" /><circle cx="10.500" cy="10" r="1.800" stroke="#ddd" strokeWidth="1.400" /></I></SiteInfo>
            <Url><b><Fit w={89}>futbolada.com</Fit></b><Fit w={377}>/chat?league=liga_profesional_de_futbol&country=argentina</Fit></Url>
            <MdStarBorder size={18} color="#d0d0d0" />
          </Omnibox>
          <ToolRight>
            <MdOutlineExtension size={19} color="#c8c8c8" />
            <Divider />
            <MdQueueMusic size={20} color="#c8c8c8" />
            <Space $w={16} />
            <Avatar />
            <Space $w={18} />
            <I><path d="M8 2h.1M8 8h.1M8 14h.1" stroke="#d0d0d0" strokeWidth="3" strokeLinecap="round" /></I>
          </ToolRight>
        </ToolbarInner>
      </Toolbar>
      <Viewport>
        <Page>
          <Texture width="1349" height="633">
            <filter id="felt" x="0" y="0" width="100%" height="100%">
              <feTurbulence type="fractalNoise" baseFrequency="0.16 0.22" numOctaves="3" seed="4" />
              <feColorMatrix values="0 0 0 0 0.09  0 0 0 0 0.32  0 0 0 0 0.17  0.7 0 0 0 -0.22" />
            </filter>
            <rect width="1349" height="633" filter="url(#felt)" opacity="0.3" />
          </Texture>
          <Header>
            <Logo />
            <Space />
            <HeaderButton $w={134}><Fit w={114}>INFORMACIÓN</Fit></HeaderButton>
            <HeaderButton $w={66}><Fit w={46}>SALIR</Fit></HeaderButton>
          </Header>
          <Columns>
            <Left>
              <Pager>
                <PageButton $w={33} $count>0</PageButton>
                {pages.map(([n, w, t]) => <PageButton key={n} $w={w} $tall={!!t}><Fit w={t || (n.length > 1 ? 19 : 11)}>{n}</Fit></PageButton>)}
              </Pager>
              <Messages>
                {messages.map(([name, nw, manji, crest, stamp, up, down, lines], i) => (
                  <Message key={i}>
                    <Author>
                      <Name><Fit w={nw}>{name}</Fit>{manji && <span>卍</span>}</Name>
                      <CrestBox>{crests[crest]}</CrestBox>
                      <Stamp><Fit w={108}>{stamp}</Fit></Stamp>
                      <Votes>
                        <span>{up}</span><Thumb><FaRegThumbsUp size={10} /></Thumb>
                        <Thumb $down><FaRegThumbsDown size={10} /></Thumb><span>{down}</span>
                      </Votes>
                    </Author>
                    <Body>{lines.map(([t, w]) => <div key={t}><Fit w={w}>{t}</Fit></div>)}</Body>
                  </Message>
                ))}
              </Messages>
            </Left>
            <Right>
              <Composer>
                <TextBox>
                  <Placeholder><Fit w={229}>Hola quiero hacer enemigos</Fit></Placeholder>
                  <Counter><Fit w={134}>17 / 800 caracteres</Fit></Counter>
                </TextBox>
                <Actions>
                  <Action><Fit w={54}>ENVIAR</Fit></Action>
                  <Action><Fit w={67}>ARCHIVO</Fit></Action>
                  <Action $sent><Fit w={67}>ENVIADO</Fit><I s={18} v={18}><rect x=".7" y=".7" width="16.600" height="16.600" fill="#16c60c" stroke="#0b3d14" strokeWidth="1.400" /><path d="m4 9.500 3 3L14 5" stroke="#fff" strokeWidth="2" /></I></Action>
                </Actions>
              </Composer>
              <Channels>
                {channels.map(([left, list]) => (
                  <ChannelRow key={left} $left={left}>
                    {list.map(([t, w, gap, tw, on]) => <Channel key={t} $w={w} $gap={gap} $on={on}><Fit w={tw}>{t}</Fit></Channel>)}
                  </ChannelRow>
                ))}
              </Channels>
              <Fixture>
                <LeagueBar><Arrow /><Fit w={228}>Primera División de Argentina</Fit><Arrow right /></LeagueBar>
                {matches.map(([date, h, dh, th, home, away, notice], i) => (
                  <Match key={i} $h={h}>
                    <MatchSide>
                      <MatchDate $h={dh}><Fit w={124}>{date}</Fit></MatchDate>
                      <MatchTools>
                        <MatchTool><TvIcon /></MatchTool>
                        <MatchTool><MatchBall /></MatchTool>
                        <MatchTool><PlusIcon /></MatchTool>
                      </MatchTools>
                    </MatchSide>
                    <MatchMain>
                      {[home, away].map(([crest, name, w], k) => (
                        <TeamRow key={name} $h={th[k]}>
                          <Team>{teamCrests[crest]}<Fit w={w}>{name}</Fit></Team>
                          <Score>-</Score>
                        </TeamRow>
                      ))}
                      <Notice>{notice && <Fit w={212}>Este partido aún no ha comenzado.</Fit>}</Notice>
                    </MatchMain>
                  </Match>
                ))}
              </Fixture>
            </Right>
          </Columns>
        </Page>
        <Scrollbar>
          <I w={8} h={5} vb="0 0 8 5"><path d="m4 0 4 5H0z" fill="#888" /></I>
          <ScrollThumb />
          <I w={8} h={5} vb="0 0 8 5"><path d="M4 5 0 0h8z" fill="#fff" /></I>
        </Scrollbar>
      </Viewport>
      <Taskbar>
        {taskIcons.map(([icon, mark, bg], i) => (
          <TaskItem key={i}>
            <TaskTile $bg={bg}>{icon}</TaskTile>
            {mark && <RunMark $wide={mark === 'active'} />}
          </TaskItem>
        ))}
        <Tray>
          <I s={14} v={14}><path d="m1.500 10 5.500-5.500L12.500 10" stroke="#fff" strokeWidth="1.300" /></I>
          <Space $w={10} />
          <I s={17} v={17}><path d="M7 1q4 2 7 2v5q0 5-7 8Q0 13 0 8V3q4 0 7-2Z" fill="#2496e0" /><path d="M7 1q4 2 7 2v5H7z" fill="#1670bd" /><circle cx="11.500" cy="11.500" r="4.500" fill="#138a36" /><path d="m9.500 11.500 1.500 1.500 3-3" stroke="#fff" strokeWidth="1.200" /></I>
          <Space $w={10} />
          <I s={16}><path d="M1 6.500a10 10 0 0 1 14 0M3.200 9a7 7 0 0 1 9.600 0M5.400 11.300a4 4 0 0 1 5.200 0" stroke="#fff" strokeWidth="1.200" /><circle cx="8" cy="13.500" r="1.300" fill="#fff" /></I>
          <Space $w={7} />
          <I s={16}><path d="M1 6h3l4-4v12l-4-4H1z" stroke="#fff" strokeWidth="1.200" /><path d="M10 5.500q2 2.500 0 5" stroke="#fff" /><path d="M12 3.500q3.500 4.500 0 9M14 2q4 6 0 12" stroke="#888" /></I>
          <Space $w={9} />
          <I s={16}><path d="M6 4.500h7v8H3.500V8" stroke="#fff" strokeWidth="1.200" /><path d="M14.800 7v3M2 1v3M5 1v3M3.500 7v3" stroke="#fff" strokeWidth="1.300" /><path d="M.8 3.500h5.400V6L5 7.500H2L.8 6z" fill="#fff" /></I>
          <Space $w={5} />
          <Clock><Fit w={27}>18:46</Fit><br /><Fit w={54}>17/8/2024</Fit></Clock>
          <Badge>1</Badge>
        </Tray>
      </Taskbar>
    </Screen>
  );
}
